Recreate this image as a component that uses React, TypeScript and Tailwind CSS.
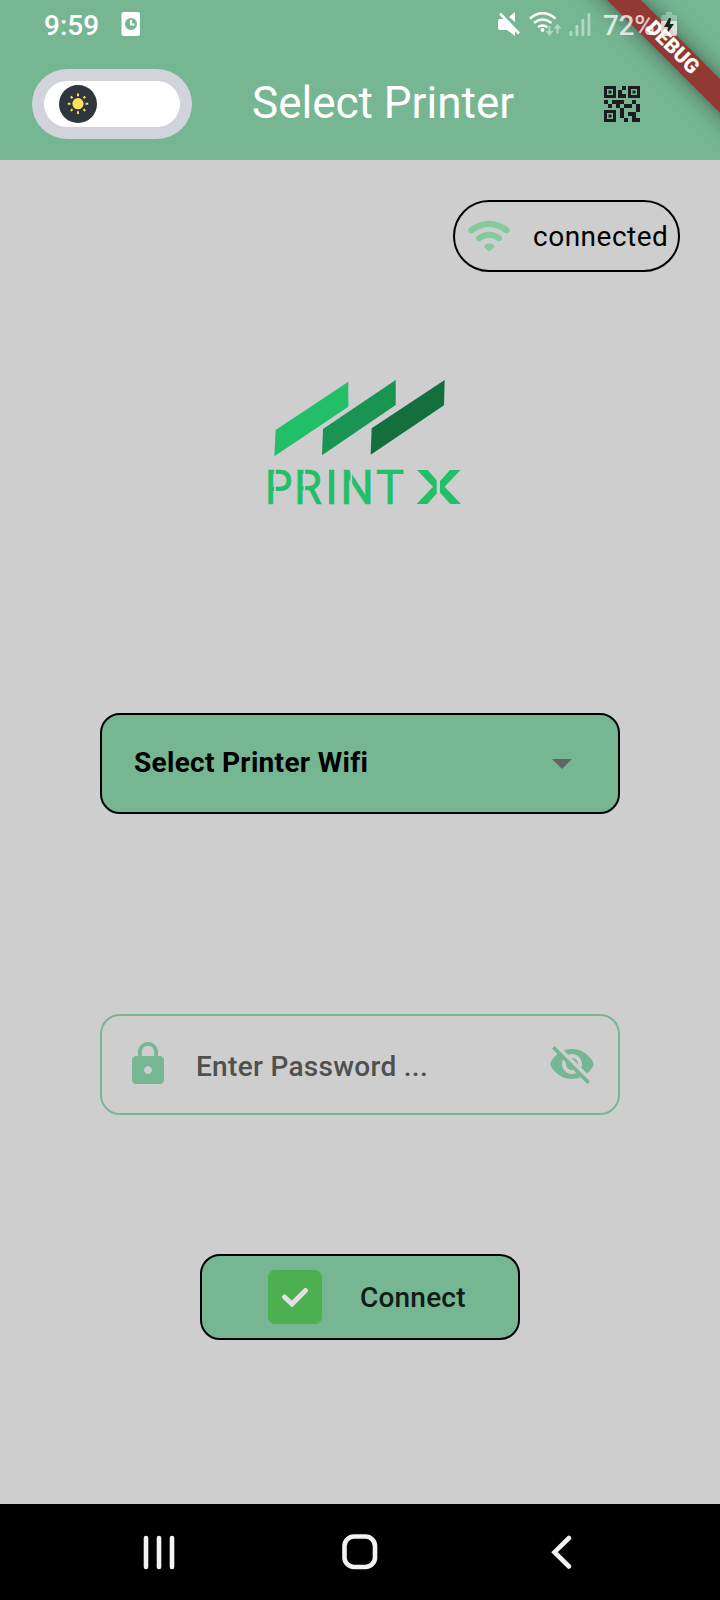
import { MdArrowDropDown, MdLock, MdQrCode2, MdVisibilityOff } from "react-icons/md";

function StatusBar() {
  return (
    <div className="relative z-20 flex h-12 items-center pr-[43px] pl-11 text-white">
      <span className="mt-[4px] w-[54px] text-[28px] leading-none font-medium">9:59</span>
      <svg className="ml-[23px] h-6 w-5" viewBox="0 0 20 24">
        <path
          fillRule="evenodd"
          fill="#fff"
          d="M2.500 0h14.500q2 0 2 2v20q0 2-2 2h-14.500q-2 0-2-2v-20q0-2 2-2zM10 6a6 6 0 1 0 .01 0z"
        />
        <path d="M10 8v4.500h3.500" fill="none" stroke="#fff" strokeWidth="2" />
      </svg>
      <span className="flex-1" />
      <svg className="h-6 w-[98px]" viewBox="0 0 98 24">
        <path fill="#fff" d="M2 7h5L17 17v7l-8-6H2q-2 0-2-2V9q0-2 2-2zM11 5l6-5v10z" />
        <path d="M2 1.500 21 21.500" fill="none" stroke="#fff" strokeWidth="2.600" />
        <g fill="none" stroke="#fff" strokeWidth="2.500">
          <path d="M32 6.500q12.500-10.500 25.500 0" />
          <path d="M36 11q8.500-7 17.500 0" />
          <path d="M40 15.300q4.500-3.600 9.500 0" />
        </g>
        <circle cx="44.500" cy="18" r="1.900" fill="#fff" />
        <g fill="#fff" fillOpacity=".45">
          <path d="M50.500 14h2v5h3l-4 5-4-5h3zM60.500 21.500h-2v-5h-3l4-4.500 4 4.500h-3z" />
          <rect x="71.500" y="19" width="2.800" height="5" rx="1" />
          <rect x="77.500" y="13" width="2.800" height="11" rx="1" />
          <rect x="83.500" y="7" width="2.800" height="17" rx="1" />
          <rect x="89.500" y="1" width="2.800" height="23" rx="1" />
        </g>
      </svg>
      <span className="mt-[4px] ml-[7px] w-[58px] text-[28px] leading-none font-medium tracking-[-0.3px] text-white/75">
        72%
      </span>
      <svg className="h-6 w-4" viewBox="0 0 16 24">
        <path fill="#fff" fillOpacity=".3" d="M5 0h6v3h3q2 0 2 2v4H0V5q0-2 2-2h3z" />
        <path fill="#fff" fillOpacity=".75" d="M0 9h16v13q0 2-2 2H2q-2 0-2-2z" />
        <path fill="#17251f" d="M8 6 3 15h4l-1 7 7-10H9l1-6z" />
      </svg>
    </div>
  );
}

function DebugBanner() {
  return (
    <div className="pointer-events-none absolute top-0 right-0 z-10 h-[160px] w-[160px] overflow-hidden">
      <div className="absolute top-[36px] left-[-18px] h-6 w-[260px] rotate-45 bg-[#913a34] shadow-[0_0_22px_rgba(0,0,0,0.5)]" />
    </div>
  );
}

function DebugLabel() {
  return (
    <div className="pointer-events-none absolute top-[35px] left-[631px] z-30 flex h-6 w-[84px] rotate-45 items-center justify-center text-[20.4px] leading-none font-black text-white">
      DEBUG
    </div>
  );
}

function ThemeToggle() {
  return (
    <div className="flex h-[70px] w-[160px] rounded-full bg-[#d1d4da] p-3">
      <div className="flex flex-1 items-center rounded-full bg-white pl-[15px]">
        <svg className="size-[38px]" viewBox="0 0 38 38">
          <circle cx="19" cy="19" r="19" fill="#2f363d" />
          <circle cx="19" cy="18.700" r="5.600" fill="#ffdf5d" />
          <path
            d="M19 8.500v2.700M19 26.200v2.700M8.800 18.700h2.700M26.500 18.700h2.700M11.800 11.500l1.700 1.700M24.500 24.200l1.700 1.700M26.200 11.500l-1.700 1.700M13.500 24.200l-1.700 1.700"
            stroke="#ffdf5d"
            strokeWidth="2"
          />
        </svg>
      </div>
    </div>
  );
}

function Logo() {
  return (
    <svg className="h-[160px] w-[220px]" viewBox="0 0 660 480">
      <path fill="#21bf67" d="M62 180 280 35v75L58 259z" />
      <path fill="#1a9453" d="M204 177 422 30v75L201 256z" />
      <path fill="#136f3d" d="M350 175 569 30l-2 76L347 254z" />
      <g fill="#21bf67" fontFamily="Roboto" fontSize="146">
        <g stroke="#21bf67" strokeWidth="2">
          <text x="30" y="403" textLength="82" lengthAdjust="spacingAndGlyphs">P</text>
          <text x="117" y="403" textLength="84" lengthAdjust="spacingAndGlyphs">R</text>
          <text x="210" y="403">I</text>
          <text x="256" y="403" textLength="101" lengthAdjust="spacingAndGlyphs">N</text>
          <text x="363" y="403" textLength="84" lengthAdjust="spacingAndGlyphs">T</text>
        </g>
        <text x="481" y="403" fontWeight="500" textLength="141" lengthAdjust="spacingAndGlyphs">X</text>
      </g>
      <path d="M60 294v112M148 294v112M289 294v112" stroke="#cecece" strokeWidth="5" />
      <path d="M550 294v112" stroke="#cecece" strokeWidth="10" />
    </svg>
  );
}

export default function App() {
  return (
    <div className="relative flex h-[1600px] w-[720px] flex-col overflow-hidden bg-[#cecece] font-['Roboto',sans-serif]">
      <header className="h-[160px] bg-[#76b693]">
        <StatusBar />
        <div className="flex h-28 items-center pr-[74px] pl-8">
          <ThemeToggle />
          <h1 className="mb-[2px] ml-[60px] flex-1 text-[44px] leading-none font-normal whitespace-nowrap text-white">
            Select Printer
          </h1>
          <MdQrCode2 className="size-12 text-[#1d1b20]" />
        </div>
      </header>
      <DebugBanner />
      <DebugLabel />

      <main className="flex flex-1 flex-col items-center">
        <div className="mt-10 mr-10 flex h-[72px] w-[227px] items-center self-end rounded-full border-2 border-black pl-[13px]">
          <svg className="h-8 w-[42px]" viewBox="0 0 42 32">
            <g fill="none" stroke="#80cc9c" strokeWidth="6" strokeLinecap="round">
              <path d="M3.300 10.200Q21-2.500 38.700 10.200" />
              <path d="M11 18.200q10-7 20 0" />
            </g>
            <path fill="#80cc9c" d="M17.500 24.500q3.500-1.800 7.500 0 2.200 1.200.5 3l-3 3q-1.500 1.300-3 0l-3-3q-1.200-1.800 1-3z" />
          </svg>
          <span className="mt-[2px] ml-[23px] text-[28px] leading-none tracking-[0.5px] text-black">connected</span>
        </div>

        <div className="mt-[98px] mr-[-10px] flex">
          <Logo />
        </div>

        <button className="mt-[183px] flex h-[101px] w-[520px] items-center rounded-[20px] border-2 border-black bg-[#76b693] pr-8 pl-8 text-[28px] leading-none font-bold text-black">
          <span className="mb-[2px] flex-1 text-left tracking-[0.3px]">Select Printer Wifi</span>
          <MdArrowDropDown className="mb-[2px] size-12 text-[#646464]" />
        </button>

        <div className="mt-[200px] flex h-[101px] w-[520px] items-center rounded-[20px] border-2 border-[#76b693] pr-[22px] pl-[22px]">
          <MdLock className="mb-[2px] size-12 text-[#76b693]" />
          <span className="mt-1 ml-6 flex-1 text-[28px] leading-none font-medium tracking-[0.3px] text-[#505050]">
            Enter Password ...
          </span>
          <MdVisibilityOff className="mb-[1px] size-12 text-[#76b693]" />
        </div>

        <button className="mt-[139px] flex h-[86px] w-[320px] items-center rounded-[20px] border-2 border-black bg-[#76b693] pl-[66px] text-[28px] leading-none font-medium text-[#101c16]">
          <span className="flex size-[54px] items-center justify-center rounded-[7px] bg-[#4caf50]">
            <svg className="size-[54px]" viewBox="0 0 54 54">
              <path
                d="m16.500 27 7.500 7 13.500-13.500"
                fill="none"
                stroke="#e0e0e0"
                strokeWidth="5"
                strokeLinecap="round"
              />
            </svg>
          </span>
          <span className="mt-[2px] ml-[38px] tracking-[0.2px]">Connect</span>
        </button>
      </main>

      <nav className="flex h-24 items-center bg-black">
        <svg className="h-24 w-full" viewBox="0 0 720 96" fill="none" stroke="#f3f3f3" strokeLinecap="round">
          <path d="M146 34v29M159 34v29M172 34v29" strokeWidth="4.600" />
          <rect x="344.500" y="32.500" width="30.500" height="30.500" rx="9.500" strokeWidth="4.600" />
          <path d="M569 34 554.500 48.200 569 62.500" strokeWidth="4.600" />
        </svg>
      </nav>
    </div>
  );
}
